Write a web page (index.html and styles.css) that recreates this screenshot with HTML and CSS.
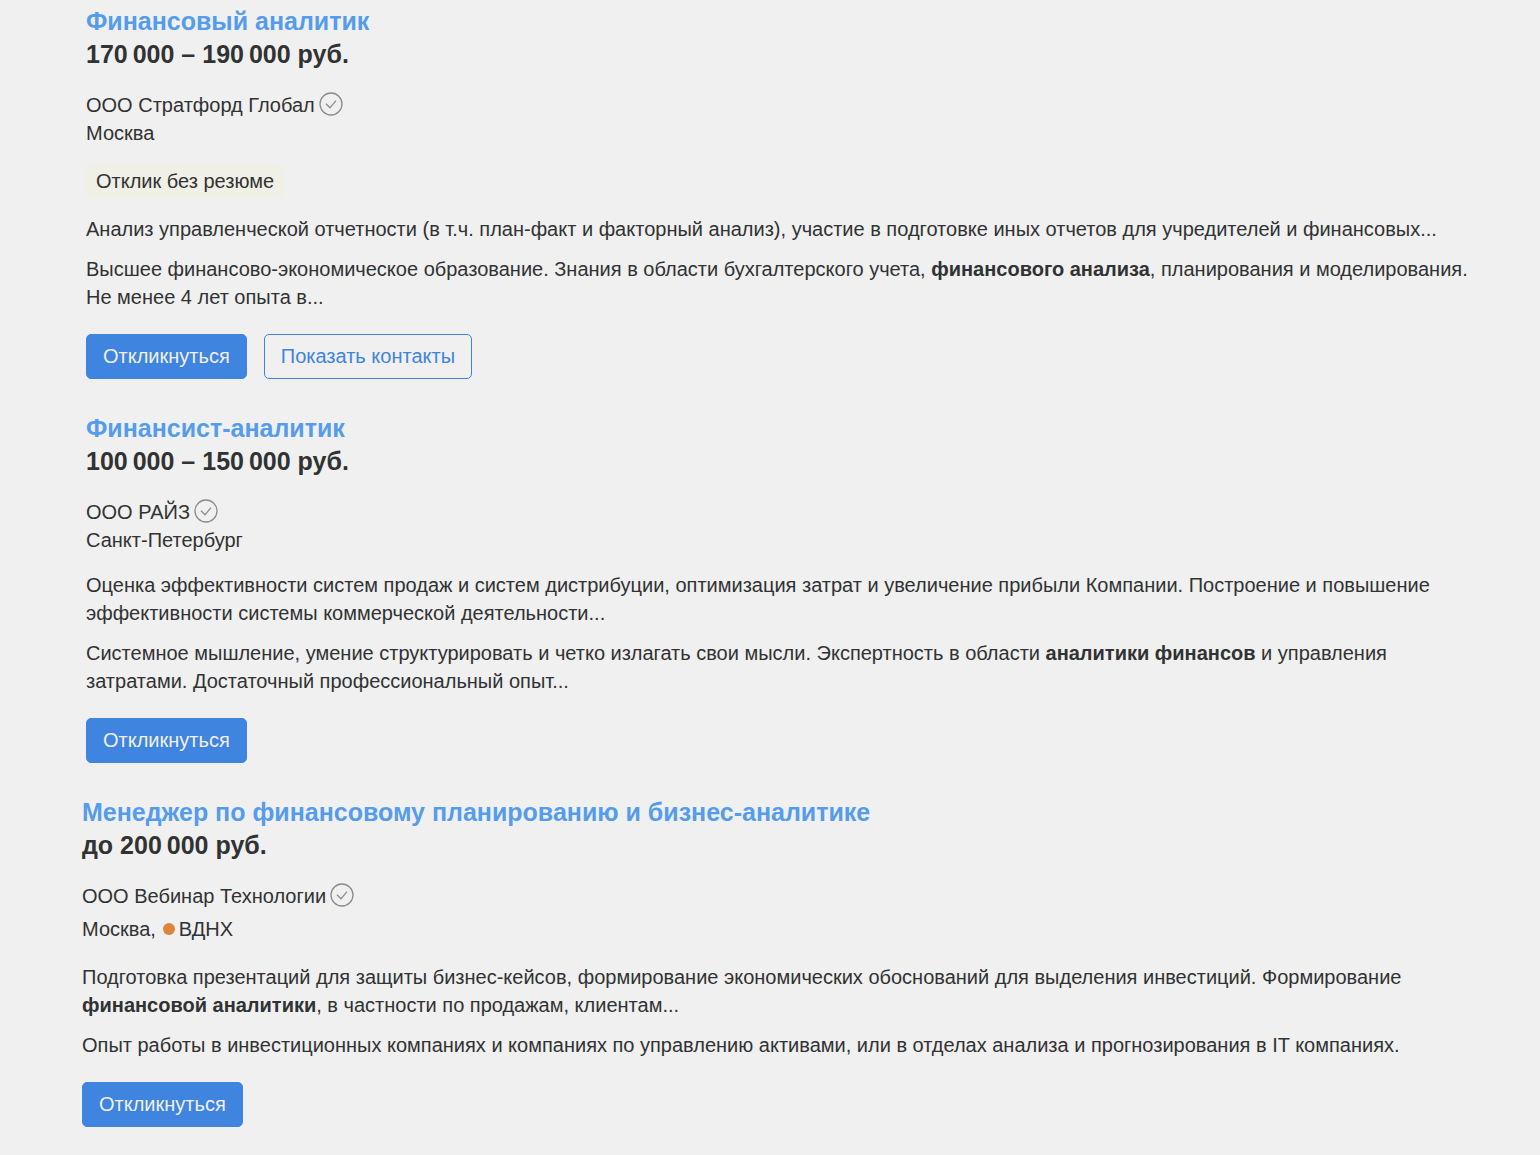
FILE: index.html
```html
<!DOCTYPE html>
<html lang="ru">
<head>
<meta charset="utf-8">
<title>Вакансии</title>
<link rel="stylesheet" href="styles.css">
</head>
<body>
<svg class="sprite" aria-hidden="true"><symbol id="check" viewBox="0 0 24 24"><circle cx="12" cy="12" r="11"/><path d="M7 11.8l4 4L17 8.6"/></symbol></svg>
<main class="list">
  <article class="job">
    <h2 class="title"><a href="#">Финансовый аналитик</a></h2>
    <p class="salary">170&thinsp;000 – 190&thinsp;000 руб.</p>
    <p class="company">ООО Стратфорд Глобал <svg class="check"><use href="#check"/></svg></p>
    <p class="place">Москва</p>
    <p class="label">Отклик без резюме</p>
    <div class="text">
      <p>Анализ управленческой отчетности (в т.ч. план-факт и факторный анализ), участие в подготовке иных отчетов для учредителей и финансовых...</p>
      <p>Высшее финансово-экономическое образование. Знания в области бухгалтерского учета, <b>финансового анализа</b>, планирования и моделирования. Не менее 4 лет опыта в...</p>
    </div>
    <div class="actions"><button class="btn primary">Откликнуться</button><button class="btn outline">Показать контакты</button></div>
  </article>
  <article class="job">
    <h2 class="title"><a href="#">Финансист-аналитик</a></h2>
    <p class="salary">100&thinsp;000 – 150&thinsp;000 руб.</p>
    <p class="company">ООО РАЙЗ <svg class="check"><use href="#check"/></svg></p>
    <p class="place">Санкт-Петербург</p>
    <div class="text">
      <p>Оценка эффективности систем продаж и систем дистрибуции, оптимизация затрат и увеличение прибыли Компании. Построение и повышение эффективности системы коммерческой деятельности...</p>
      <p>Системное мышление, умение структурировать и четко излагать свои мысли. Экспертность в области <b>аналитики финансов</b> и управления затратами. Достаточный профессиональный опыт...</p>
    </div>
    <div class="actions"><button class="btn primary">Откликнуться</button></div>
  </article>
  <article class="job wide">
    <h2 class="title"><a href="#">Менеджер по финансовому планированию и бизнес-аналитике</a></h2>
    <p class="salary">до 200&thinsp;000 руб.</p>
    <p class="company">ООО Вебинар Технологии <svg class="check"><use href="#check"/></svg></p>
    <p class="place metro">Москва, <span class="dot"></span>ВДНХ</p>
    <div class="text">
      <p>Подготовка презентаций для защиты бизнес-кейсов, формирование экономических обоснований для выделения инвестиций. Формирование <b>финансовой аналитики</b>, в частности по продажам, клиентам...</p>
      <p>Опыт работы в инвестиционных компаниях и компаниях по управлению активами, или в отделах анализа и прогнозирования в IT компаниях.</p>
    </div>
    <div class="actions"><button class="btn primary">Откликнуться</button></div>
  </article>
</main>
</body>
</html>
```
FILE: styles.css
```css
* { box-sizing: border-box; }
body { margin: 0; background: #f0f0f0; color: #303233; font: 20px/28px "Liberation Sans", Arial, sans-serif; }
p, h2 { margin: 0; }
.sprite { position: absolute; width: 0; height: 0; }
.list { display: flex; flex-direction: column; gap: 33px; padding: 5px 64px 28px 86px; }
.wide { margin-left: -4px; }
.title { font-size: 25px; line-height: 33px; }
.title a { color: #569cec; text-decoration: none; }
.salary { font-size: 25px; line-height: 33px; font-weight: bold; }
.company { display: flex; align-items: center; gap: 4px; margin-top: 20px; }
.check { width: 24px; height: 24px; fill: none; stroke: #8b8b8b; stroke-width: 1.3; margin-top: -3px; }
.metro { display: flex; align-items: center; margin: 5px 0 20px; }
.dot { width: 12px; height: 12px; margin: 0 4px 0 7px; border-radius: 50%; background: #dd843e; }
.label { width: fit-content; margin-top: 17px; padding: 3px 10px; border-radius: 4px; background: #f0f0e6; }
.text { display: flex; flex-direction: column; gap: 12px; margin-top: 17px; }
.actions { display: flex; gap: 17px; margin-top: 23px; }
.btn { height: 45px; padding: 0 16px 2px; border: 1px solid #3f84df; border-radius: 5px; font: inherit; }
.primary { background: #3f84df; color: #f0f0f0; }
.outline { background: transparent; color: #3f84df; }
```
